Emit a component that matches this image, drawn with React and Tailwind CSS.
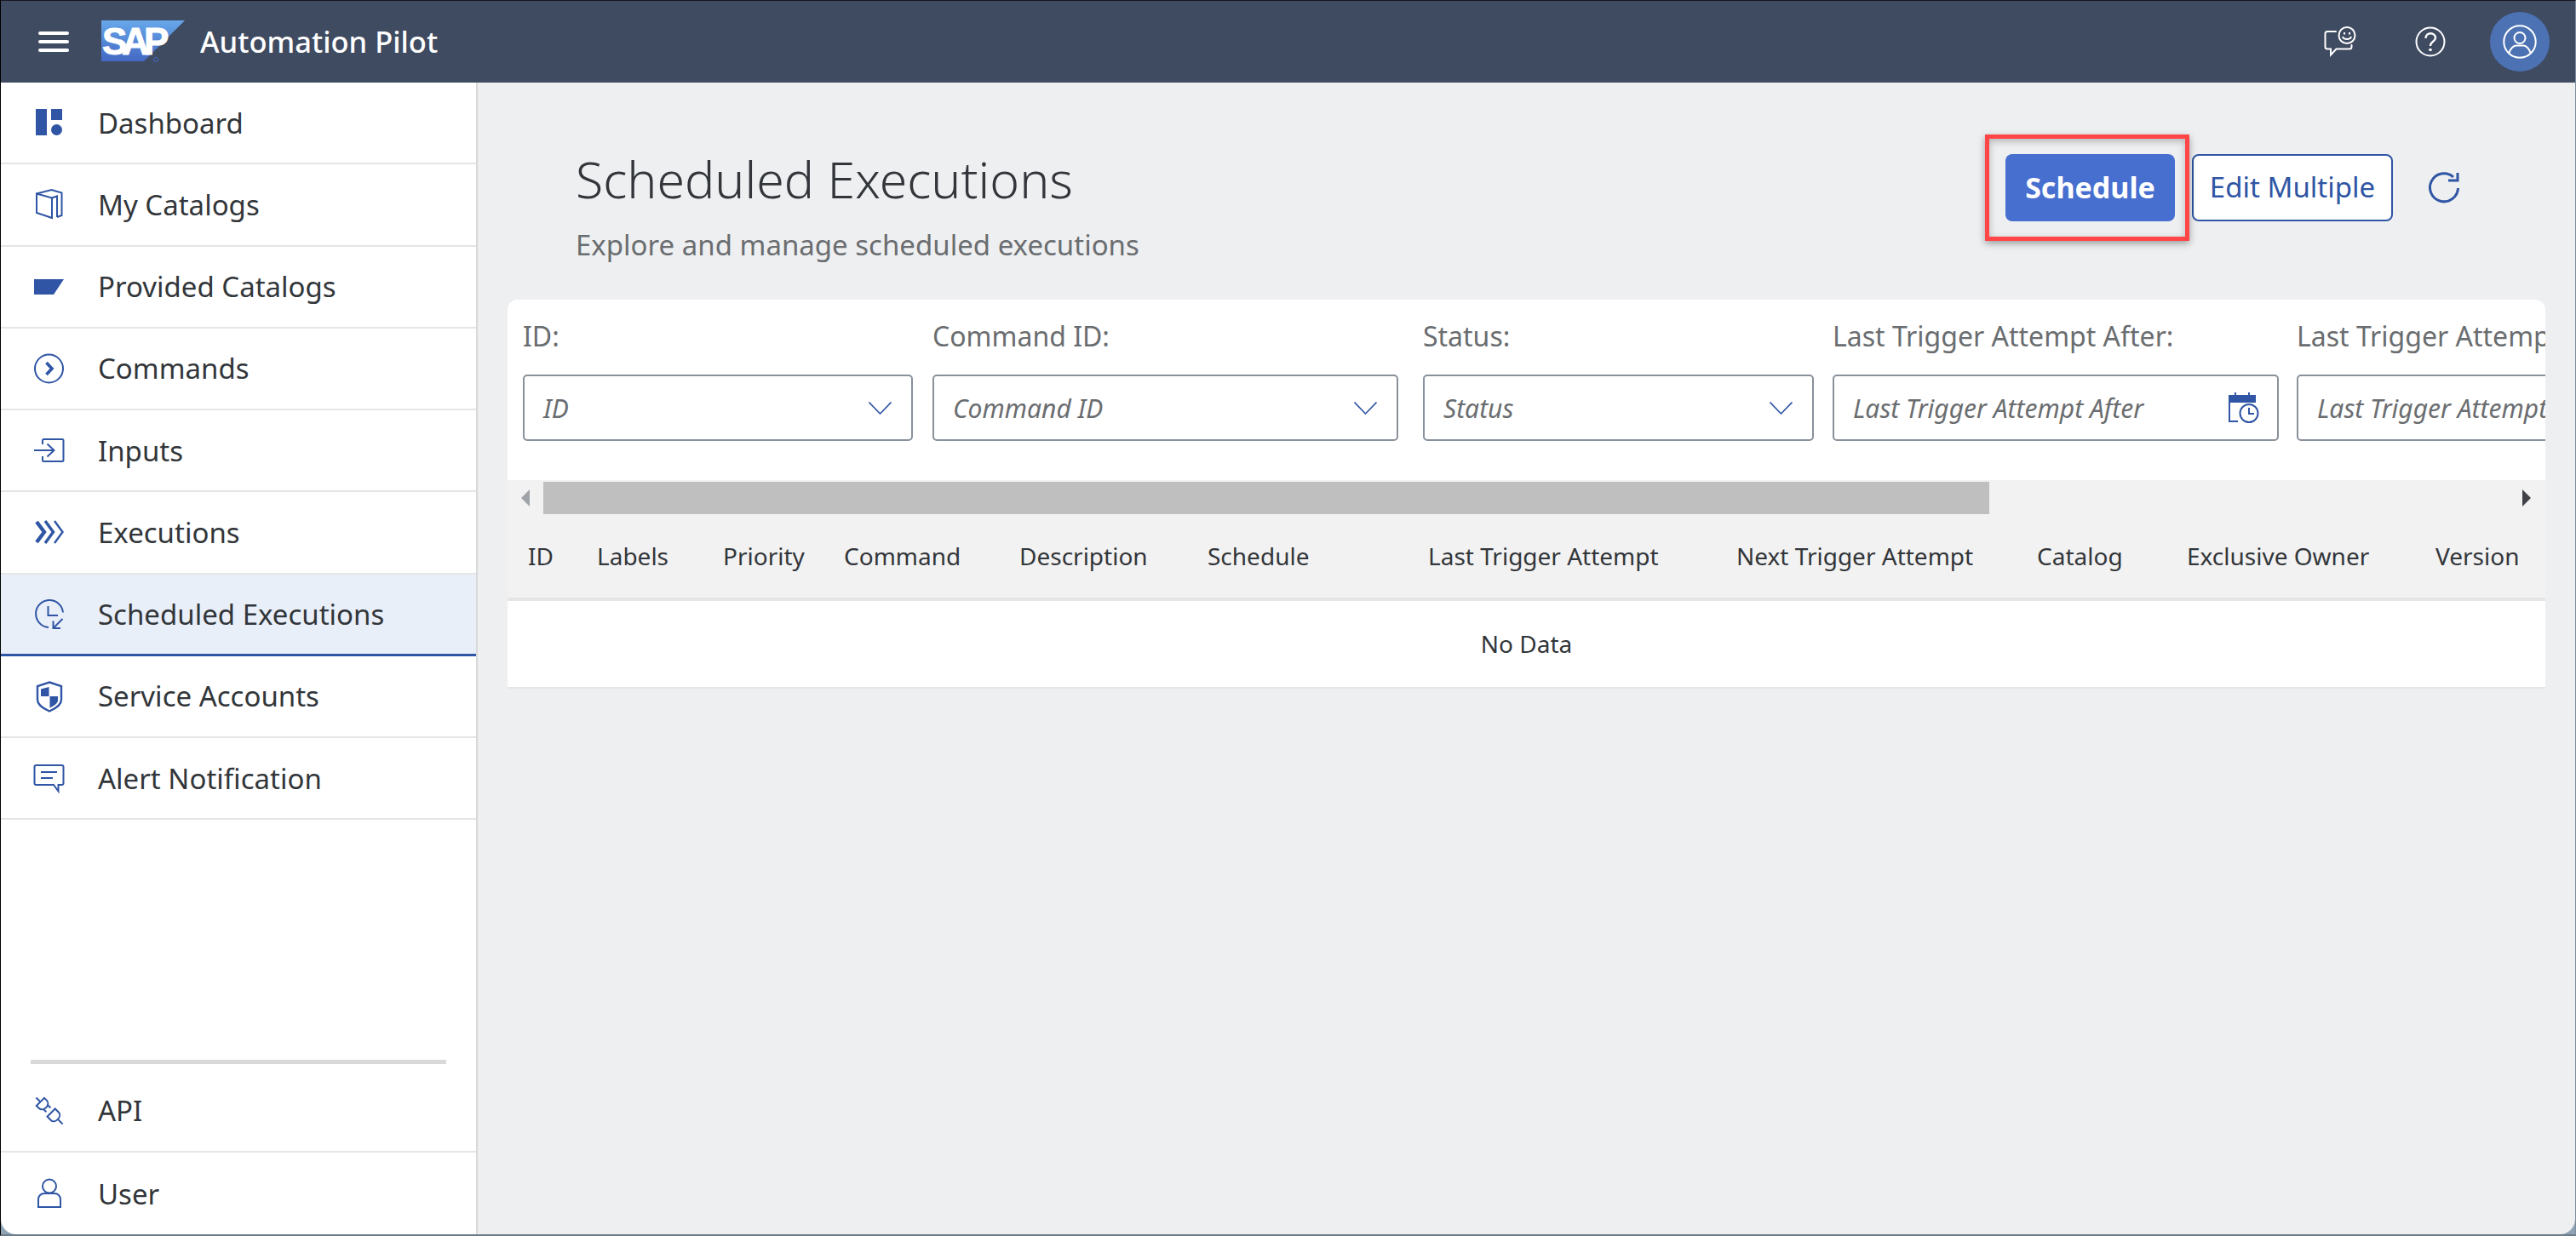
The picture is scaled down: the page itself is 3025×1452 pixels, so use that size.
const navItems = [
  { label: 'Dashboard', icon: DashboardIcon },
  { label: 'My Catalogs', icon: BookIcon },
  { label: 'Provided Catalogs', icon: FolderIcon },
  { label: 'Commands', icon: CommandIcon },
  { label: 'Inputs', icon: InputIcon },
  { label: 'Executions', icon: ExecutionsIcon },
  { label: 'Scheduled Executions', icon: ScheduledIcon, active: true },
  { label: 'Service Accounts', icon: ShieldIcon },
  { label: 'Alert Notification', icon: AlertIcon },
];

const columns = [
  { label: 'ID', width: 'w-[81px]' },
  { label: 'Labels', width: 'w-[148px]' },
  { label: 'Priority', width: 'w-[142px]' },
  { label: 'Command', width: 'w-[206px]' },
  { label: 'Description', width: 'w-[221px]' },
  { label: 'Schedule', width: 'w-[259px]' },
  { label: 'Last Trigger Attempt', width: 'w-[362px]' },
  { label: 'Next Trigger Attempt', width: 'w-[353px]' },
  { label: 'Catalog', width: 'w-[176px]' },
  { label: 'Exclusive Owner', width: 'w-[292px]' },
  { label: 'Version', width: 'w-[120px]' },
];

function Svg({ children }) {
  return (
    <svg width="36" height="36" viewBox="0 0 36 36" fill="none" stroke="#2f55a4" strokeWidth="2" className="shrink-0 overflow-visible">
      {children}
    </svg>
  );
}

function DashboardIcon() {
  return (
    <Svg>
      <g fill="#2f55a4" stroke="none">
        <rect x="2" y="2" width="13" height="31" />
        <rect x="20" y="2" width="13" height="13" />
        <circle cx="26.5" cy="26.5" r="6.5" />
      </g>
    </Svg>
  );
}

function BookIcon() {
  return (
    <Svg>
      <path d="M3 5.5 20.5 1 32.5 4.5V31L27 33" />
      <path d="M3 5.5 21 10.5V34L3 28Z" />
      <path d="M21 10.5 27 8.5V33" />
    </Svg>
  );
}

function FolderIcon() {
  return (
    <Svg>
      <path d="M0 9H35L23 27H0Z" fill="#2f55a4" stroke="none" />
    </Svg>
  );
}

function CommandIcon() {
  return (
    <Svg>
      <circle cx="17.5" cy="18" r="16.5" />
      <path d="M14.5 11 21 18 14.5 25" strokeWidth="3.6" />
    </Svg>
  );
}

function InputIcon() {
  return (
    <Svg>
      <path d="M10 11V6.5C10 5.5 10.5 5 11.5 5H33C34 5 34.5 5.5 34.5 6.5V29.5C34.5 30.5 34 31 33 31H11.5C10.5 31 10 30.5 10 29.5V25" />
      <path d="M0 18H23M15.5 10.5 23.5 18 15.5 25.5" />
    </Svg>
  );
}

function ExecutionsIcon() {
  return (
    <Svg>
      <path d="M3 6 12 18 3 30" strokeWidth="4.4" />
      <path d="M13 5 22.5 18 13 31" strokeWidth="3.4" />
      <path d="M24 5 33.5 18 24 31" strokeWidth="2.4" />
    </Svg>
  );
}

function ScheduledIcon() {
  return (
    <Svg>
      <path d="M17 34A16 16 0 1 1 34 16.5" />
      <path d="M16.5 9V20H28" />
      <path d="M33.5 24 22.5 35M22.5 26.5V35H31" />
    </Svg>
  );
}

function ShieldIcon() {
  return (
    <Svg>
      <path d="M18 1.5 32 6V22C32 27.5 25 32.5 18 35.5 11 32.5 4 27.5 4 22V6Z" strokeWidth="2.4" />
      <path d="M8 9.5 17.5 7V18H8Z" fill="#2f55a4" stroke="none" />
      <path d="M18.5 18H28V23C28 26 23 29.5 18.5 31.5Z" fill="#2f55a4" stroke="none" />
    </Svg>
  );
}

function AlertIcon() {
  return (
    <Svg>
      <path d="M2.5 3H32.5C33.5 3 34.5 4 34.5 5V24C34.5 25 33.5 26 32.5 26H28.5V33.5L23 26H2.5C1.5 26 .5 25 .5 24V5C.5 4 1.5 3 2.5 3Z" />
      <path d="M8 11H27M8 18H22" />
    </Svg>
  );
}

function ApiIcon() {
  return (
    <Svg>
      {/* two plug halves on a diagonal */}
      <g transform="rotate(-45 18 18)">
        <path d="M18 -4V3" />
        <path d="M11.5 3H24.5V7C24.5 10.5 21.5 12.5 18 12.5 14.5 12.5 11.5 10.5 11.5 7Z" />
        <path d="M14.5 12V16.5M21.5 12V16.5" />
        <path d="M11.5 21H24.5V27C24.5 30 21.5 32 18 32 14.5 32 11.5 30 11.5 27Z" />
        <path d="M18 32V40" />
      </g>
    </Svg>
  );
}

function UserIcon() {
  return (
    <Svg>
      <circle cx="18" cy="9.5" r="8" />
      <path d="M5 34V25C5 21 8 18 12 18H24C28 18 31 21 31 25V34Z" />
    </Svg>
  );
}

function NavRow({ label, icon: Icon, active, last }) {
  let rowClass = 'flex h-[96.25px] items-center border-b-2 border-[#e5e5e5] pl-[39px]';
  if (active) rowClass = 'flex h-[96.25px] items-center border-b-[3px] border-[#2f55a4] bg-[#e9eff9] pl-[39px]';
  if (last) rowClass = 'flex h-[96px] items-center pl-[39px]';
  return (
    <div className={rowClass}>
      <Icon />
      <span className="ml-[39px] text-[33px] leading-none text-[#32363a]">{label}</span>
    </div>
  );
}

function SapLogo() {
  return (
    <svg width="98" height="50" viewBox="0 0 98 50" className="block">
      <defs>
        <linearGradient id="sapBlue" x1="0" y1="0" x2="0" y2="1">
          <stop offset="0" stopColor="#67a8ea" />
          <stop offset="1" stopColor="#4468c4" />
        </linearGradient>
      </defs>
      <path d="M0 0H98L50 48H0Z" fill="url(#sapBlue)" />
      <text x="1" y="40" fontFamily="Liberation Sans" fontWeight="700" fontSize="44" letterSpacing="-6" fill="#fff" stroke="#fff" strokeWidth="1">
        SAP
      </text>
      <circle cx="64" cy="46" r="2.6" fill="none" stroke="#4468c4" strokeWidth="1" />
    </svg>
  );
}

function Field({ label, placeholder, width, icon }) {
  return (
    <div className={`shrink-0 ${width}`}>
      <div className="flex h-[38px] items-center whitespace-nowrap text-[32px] text-[#6a6d70]">{label}</div>
      <div className="mt-[26px] flex h-[78px] items-center justify-between overflow-hidden rounded-[5px] border-2 border-[#89919a] bg-white pl-[22px] pr-[23px]">
        <span className="whitespace-nowrap text-[30px] italic text-[#6a6d70]">{placeholder}</span>
        {icon === 'calendar' ? <CalendarIcon /> : <DropdownArrow />}
      </div>
    </div>
  );
}

function DropdownArrow() {
  return (
    <svg width="27" height="15" viewBox="0 0 27 15" fill="none" stroke="#2f55a4" strokeWidth="1.6" className="shrink-0">
      <path d="M.5 .5 13.5 14 26.5 .5" />
    </svg>
  );
}

function CalendarIcon() {
  return (
    <svg width="36" height="36" viewBox="0 0 36 36" fill="none" stroke="#2f55a4" strokeWidth="2" className="-mr-[2px] ml-[12px] shrink-0">
      <path d="M1 4H31V11H1Z" fill="#2f55a4" />
      <path d="M8 0V5M24 0V5" />
      <path d="M1 11V34H11" />
      <circle cx="24" cy="24.5" r="10.5" />
      <path d="M24 18V25H30" />
    </svg>
  );
}

export default function App() {
  return (
    <div className="flex h-[1452px] w-[3025px] flex-col overflow-hidden border-t border-l border-r border-b-2 border-t-[#15181d] border-l-black border-r-[#7d8d9c] border-b-[#6d7a88] bg-[#8fa3b5] font-['Noto_Sans',sans-serif]">
      <header className="flex h-[96px] shrink-0 items-center bg-[#3f4b61] text-white">
        <svg width="36" height="26" viewBox="0 0 36 26" className="ml-[44px]" fill="#fff">
          <rect width="36" height="4" y="1" rx="2" />
          <rect width="36" height="4" y="11" rx="2" />
          <rect width="36" height="4" y="21" rx="2" />
        </svg>
        <div className="ml-[38px]">
          <SapLogo />
        </div>
        <span className="ml-[18px] text-[34.5px] font-medium leading-none">Automation Pilot</span>
        <div className="ml-auto flex items-center">
          <svg width="38" height="36" viewBox="0 0 38 36" fill="none" stroke="#fff" strokeWidth="2">
            <path d="M14 6H4C2.5 6 1.5 7 1.5 8.5V24C1.5 25.5 2.5 26.5 4 26.5H8V33.5L14.5 26.5H30C31.5 26.5 32.5 25.5 32.5 24V22" strokeLinecap="round" />
            <circle cx="27" cy="10.5" r="9.5" />
            <path d="M22 12C23 16 31 16 32 12" />
            <path d="M24 7V9.5M30 7V9.5" />
          </svg>
          <svg width="36" height="36" viewBox="0 0 36 36" fill="none" stroke="#fff" strokeWidth="2" className="ml-[69px]">
            <circle cx="18" cy="18" r="16.5" />
            <path d="M12.5 14C12.5 6.5 24 6.5 24 13.5 24 17.5 18 18 18 23" strokeWidth="2.4" />
            <circle cx="18" cy="27.5" r="1.8" fill="#fff" stroke="none" />
          </svg>
          <div className="ml-[52px] mr-[30px] flex h-[70px] w-[70px] items-center justify-center rounded-full bg-[#4c72b4]">
            <svg width="40" height="40" viewBox="0 0 40 40" fill="none" stroke="#fff" strokeWidth="2">
              <circle cx="20" cy="20" r="18.7" />
              <circle cx="20" cy="15.5" r="6.5" />
              <path d="M7.5 33C9 27.5 13 24.5 16 24.5H24C27 24.5 31 27.5 32.5 33" />
            </svg>
          </div>
        </div>
      </header>

      <div className="flex min-h-0 flex-1">
        <aside className="flex w-[560px] shrink-0 flex-col justify-between rounded-bl-[18px] border-r-2 border-[#d9d9d9] bg-white">
          <nav>
            {navItems.map((item) => (
              <NavRow key={item.label} {...item} />
            ))}
          </nav>
          <div>
            <div className="mx-[35px] mb-[8px] h-[5px] bg-[#d9d9d9]" />
            <NavRow label="API" icon={ApiIcon} />
            <NavRow label="User" icon={UserIcon} last />
          </div>
        </aside>

        <main className="min-w-0 flex-1 rounded-br-[18px] bg-[#eeeff1]">
          <section className="flex h-[255px] items-start justify-between pl-[115px] pr-[135px]">
            <div className="pt-[78px]">
              <h1 className="text-[59px] font-light leading-[70px] text-[#32363a]">Scheduled Executions</h1>
              <p className="mt-[21px] text-[33px] leading-[44px] text-[#6a6d70]">Explore and manage scheduled executions</p>
            </div>
            <div className="flex items-center pt-[84px]">
              <div className="relative">
                <button className="h-[79px] w-[199px] rounded-[8px] bg-[#476fd0] pb-[2px] text-[34px] font-bold leading-none text-white">Schedule</button>
                <div className="absolute -left-[24px] -top-[23px] h-[125px] w-[240px] border-[5px] border-[#ff4545] shadow-[0_3px_8px_rgba(0,0,0,0.35),inset_0_3px_8px_rgba(0,0,0,0.25)]" />
              </div>
              <button className="ml-[20px] h-[79px] w-[236px] rounded-[8px] border-2 border-[#2f55a4] bg-white pb-[2px] text-[33px] leading-none text-[#2f55a4]">Edit Multiple</button>
              <svg width="38" height="38" viewBox="0 0 38 38" fill="none" stroke="#2f55a4" strokeWidth="3" className="ml-[41px]">
                <path d="M30 6A16.5 16.5 0 1 0 35.5 19" />
                <path d="M35 1V10H24" />
              </svg>
            </div>
          </section>

          <section className="mx-[35px] overflow-hidden rounded-t-[12px] bg-white">
            <div className="flex h-[212px] overflow-hidden pl-[18px] pt-[24px]">
              <Field label="ID:" placeholder="ID" width="mr-[23px] w-[458px]" />
              <Field label="Command ID:" placeholder="Command ID" width="mr-[29px] w-[547px]" />
              <Field label="Status:" placeholder="Status" width="mr-[22px] w-[459px]" />
              <Field label="Last Trigger Attempt After:" placeholder="Last Trigger Attempt After" width="mr-[21px] w-[524px]" icon="calendar" />
              <Field label="Last Trigger Attempt Before:" placeholder="Last Trigger Attempt Before" width="w-[524px]" icon="calendar" />
            </div>

            <div className="h-[138px] bg-[#f2f2f2]">
              <div className="flex h-[40px] items-end pl-[16px] pr-[17px]">
                <div className="flex h-[38px] items-center">
                  <div className="h-0 w-0 border-y-[10px] border-r-[10px] border-y-transparent border-r-[#a0a4a8]" />
                </div>
                <div className="ml-[16px] h-[38px] w-[1698px] bg-[#bfbfbf]" />
                <div className="ml-auto flex h-[38px] items-center">
                  <div className="h-0 w-0 border-y-[10px] border-l-[10px] border-y-transparent border-l-[#3f4347]" />
                </div>
              </div>
              <div className="flex h-[98px] items-center pl-[24px]">
                {columns.map((col) => (
                  <div key={col.label} className={`shrink-0 whitespace-nowrap text-[28px] text-[#32363a] ${col.width}`}>
                    {col.label}
                  </div>
                ))}
              </div>
            </div>
            <div className="flex h-[107px] items-center justify-center border-t-4 border-b-2 border-t-[#e5e5e5] border-b-[#e5e5e5] pb-[1px] text-[28px] text-[#32363a]">
              No Data
            </div>
          </section>
        </main>
      </div>
    </div>
  );
}
